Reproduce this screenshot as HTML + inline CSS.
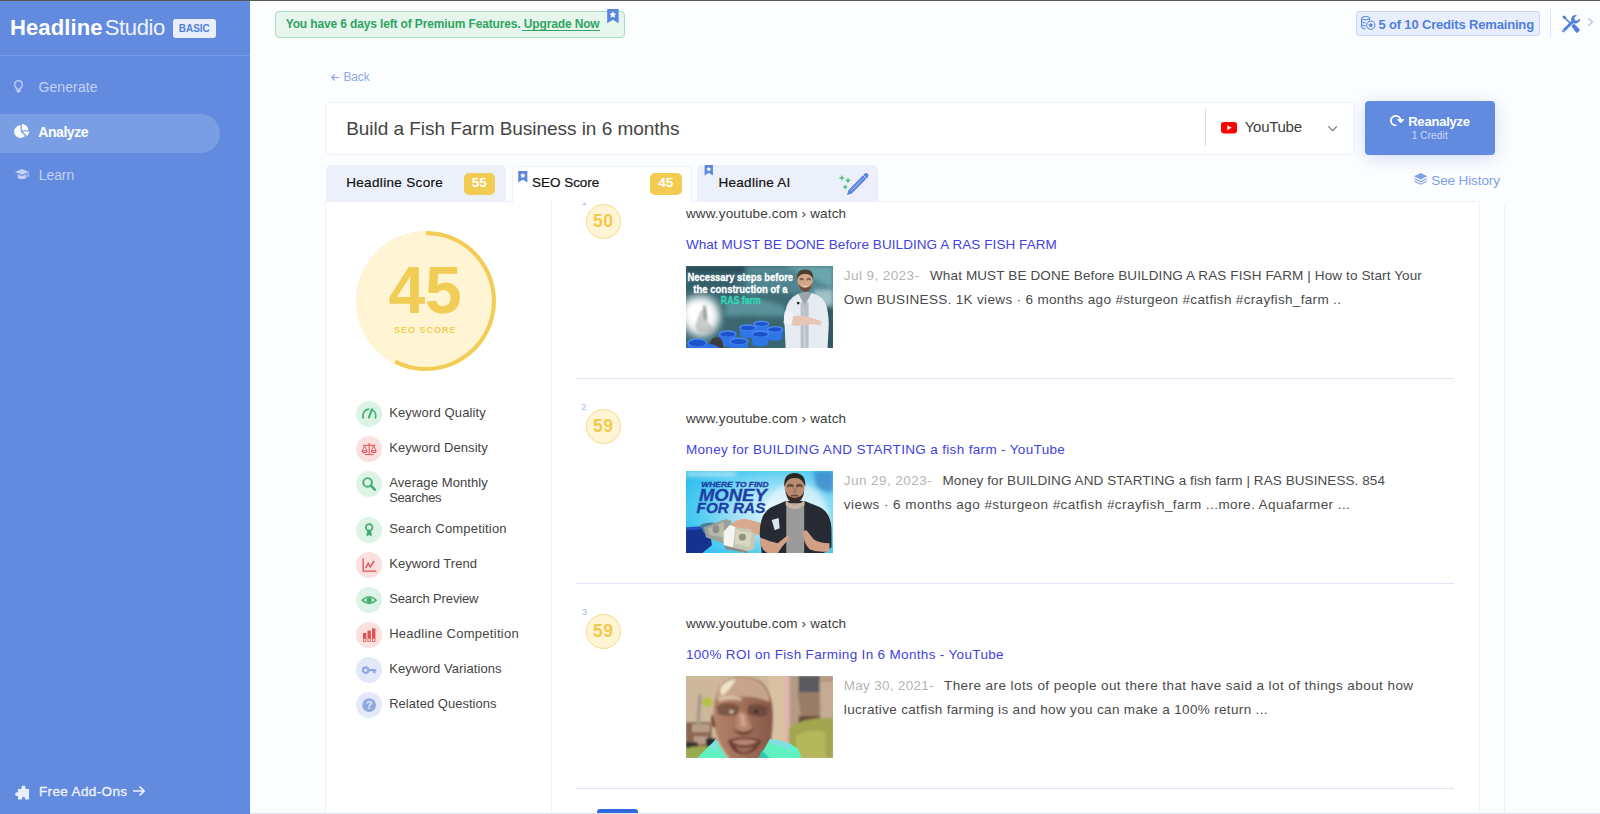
<!DOCTYPE html>
<html><head><meta charset="utf-8"><title>Headline Studio</title>
<style>
html,body{margin:0;padding:0}
body{width:1600px;height:814px;overflow:hidden;position:relative;background:#fcfdfe;font-family:"Liberation Sans",sans-serif}
.t{position:absolute;white-space:pre;line-height:1;font-family:"Liberation Sans",sans-serif}
.a{position:absolute}
svg{position:absolute;overflow:visible}
</style></head><body>
<div class="a" style="left:0px;top:0px;width:250px;height:814px;background:#628be0;"></div>
<div class="a" style="left:0px;top:55px;width:250px;height:1px;background:rgba(255,255,255,.13);"></div>
<div class="a" style="left:0px;top:114px;width:220px;height:38.5px;background:#7a9ee4;border-radius:0 20px 20px 0"></div>
<div class="a" style="left:173px;top:19px;width:43px;height:18.5px;background:#e9eefb;border-radius:3px"></div>
<div class="a" style="left:0px;top:0px;width:1600px;height:1px;background:#5a5a5a;"></div>
<div class="a" style="left:275px;top:11px;width:350px;height:27px;background:#e7f6ec;border:1px solid #a9dcbf;border-radius:4px;box-sizing:border-box"></div>
<div class="a" style="left:522.3px;top:30px;width:77.3px;height:1px;background:#2fa563;"></div>
<div class="a" style="left:1355.5px;top:11px;width:184px;height:24.5px;background:#e8eefb;border:1px solid #c9d6f5;border-radius:3px;box-sizing:border-box"></div>
<div class="a" style="left:1550px;top:9px;width:1px;height:28.5px;background:#dfe6f7;"></div>
<div class="a" style="left:325px;top:101.5px;width:1030px;height:53px;background:#fff;border:1px solid #edf0f8;border-radius:5px;box-sizing:border-box"></div>
<div class="a" style="left:1204.5px;top:109px;width:1px;height:37px;background:#dcdcdc;"></div>
<div class="a" style="left:1365px;top:101px;width:130px;height:53.5px;background:#628be0;border-radius:4px;box-shadow:0 3px 18px rgba(98,139,224,.28)"></div>
<div class="a" style="left:325.5px;top:165px;width:180.5px;height:37px;background:#ecf0fb;border-radius:5px 5px 0 0"></div>
<div class="a" style="left:697px;top:165px;width:181px;height:37px;background:#ecf0fb;border-radius:5px 5px 0 0"></div>
<div class="a" style="left:325px;top:201px;width:1179.5px;height:620px;background:#fff;border:1px solid #edf0f9;border-radius:0 6px 0 0;box-sizing:border-box"></div>
<div class="a" style="left:511.5px;top:165.5px;width:180px;height:36.5px;background:#fff;border:1px solid #edf0f9;border-bottom:none;border-radius:5px 5px 0 0;box-sizing:border-box"></div>
<div class="a" style="left:463.5px;top:173px;width:31.5px;height:21.5px;background:#f2cb51;border-radius:5px"></div>
<div class="a" style="left:650px;top:173px;width:31.5px;height:21.5px;background:#f2cb51;border-radius:5px"></div>
<div class="a" style="left:551px;top:201px;width:1px;height:613px;background:#eef1f9;"></div>
<div class="a" style="left:1479px;top:201px;width:1px;height:613px;background:#eef1f9;"></div>
<div class="a" style="left:1480px;top:201px;width:24px;height:613px;background:#fcfdff;"></div>
<div class="a" style="left:576px;top:378px;width:878px;height:1px;background:#dfe6f6;"></div>
<div class="a" style="left:576px;top:583px;width:878px;height:1px;background:#dfe6f6;"></div>
<div class="a" style="left:576px;top:788px;width:878px;height:1px;background:#dfe6f6;"></div>
<div class="a" style="left:586px;top:203.9px;width:35px;height:35px;background:#fff4d3;border:1px solid #f6dd86;border-radius:50%;box-sizing:border-box"></div>
<div class="a" style="left:586px;top:408.9px;width:35px;height:35px;background:#fff4d3;border:1px solid #f6dd86;border-radius:50%;box-sizing:border-box"></div>
<div class="a" style="left:586px;top:613.9px;width:35px;height:35px;background:#fff4d3;border:1px solid #f6dd86;border-radius:50%;box-sizing:border-box"></div>
<div class="a" style="left:580px;top:201.5px;width:10px;height:4px;overflow:hidden"><span class="t" style="left:1.6px;top:-5px;font-size:9.5px;color:#a9bcec">1</span></div>
<div class="a" style="left:250px;top:812.5px;width:1350px;height:1.5px;background:#dfe3ec;z-index:5"></div>
<div class="a" style="left:597px;top:809px;width:41px;height:6px;background:#2f6bdc;border-radius:3px 3px 0 0"></div>
<svg style="left:355.5px;top:231px" width="140" height="140" viewBox="0 0 140 140">
<circle cx="70" cy="70" r="70" fill="#fff4d3"/>
<path d="M70 2 A68 68 0 1 1 39.1 130.6" fill="none" stroke="#f2cd55" stroke-width="4"/>
</svg>
<div class="a" style="left:355.5px;top:400.8px;width:26.3px;height:26.3px;background:#dcf3e5;border-radius:50%"></div>
<div class="a" style="left:355.5px;top:435.8px;width:26.3px;height:26.3px;background:#fbe0e0;border-radius:50%"></div>
<div class="a" style="left:355.5px;top:470.8px;width:26.3px;height:26.3px;background:#dcf3e5;border-radius:50%"></div>
<div class="a" style="left:355.5px;top:516.9px;width:26.3px;height:26.3px;background:#dcf3e5;border-radius:50%"></div>
<div class="a" style="left:355.5px;top:552px;width:26.3px;height:26.3px;background:#fbe0e0;border-radius:50%"></div>
<div class="a" style="left:355.5px;top:587px;width:26.3px;height:26.3px;background:#dcf3e5;border-radius:50%"></div>
<div class="a" style="left:355.5px;top:622px;width:26.3px;height:26.3px;background:#fbe0e0;border-radius:50%"></div>
<div class="a" style="left:355.5px;top:657px;width:26.3px;height:26.3px;background:#e3e9f8;border-radius:50%"></div>
<div class="a" style="left:355.5px;top:692px;width:26.3px;height:26.3px;background:#e3e9f8;border-radius:50%"></div>
<svg style="left:13.7px;top:79.8px" width="9" height="13" viewBox="0 0 9 13"><path d="M4.5 .7A3.8 3.8 0 0 0 2.3 7.6V9h4.4V7.6A3.8 3.8 0 0 0 4.5 .7Z" fill="none" stroke="#c3d2f3" stroke-width="1.2"/><path d="M2.6 9.6h3.8v1.6L5.4 12.6H3.6L2.6 11.2Z" fill="#c3d2f3"/></svg>
<svg style="left:14px;top:123.9px" width="15.4" height="14" viewBox="0 0 15.4 14"><path d="M6.6 1.3V7.6L11 12A6.3 6.3 0 1 1 6.6 1.3Z" fill="#fff"/><path d="M7.9 0A6.4 6.4 0 0 1 14.3 6.3H7.9Z" fill="#fff"/><path d="M8.6 7.6H15.3A6.4 6.4 0 0 1 13 12Z" fill="#fff"/></svg>
<svg style="left:14.6px;top:169.2px" width="14" height="12" viewBox="0 0 14 12"><path d="M7 0L14 2.9 7 5.8 0 2.9Z" fill="#c3d2f3"/><path d="M2.6 5.3V8.6C4 10.6 10 10.6 11.4 8.6V5.3L7 7.1Z" fill="#c3d2f3"/><path d="M13.2 3.3V8" stroke="#c3d2f3" stroke-width="1" fill="none"/></svg>
<svg style="left:14px;top:785px" width="15" height="14.5" viewBox="0 0 15 14.5"><path d="M4 4H7.5V2.6A2 2 0 0 1 11.5 2.6V4H15V14.5H11V13.2A1.5 1.5 0 0 0 8 13.2V14.5H4V11H2.6A1.9 1.9 0 0 1 2.6 7.3H4Z" fill="#e8eefc"/></svg>
<svg style="left:132.5px;top:786.3px" width="12" height="10" viewBox="0 0 12 10"><path d="M0 5H11M6.6 .6L11.2 5 6.6 9.4" fill="none" stroke="#f0f4fd" stroke-width="1.5"/></svg>
<svg style="left:330.6px;top:74px" width="8.2" height="7" viewBox="0 0 8.2 7"><path d="M8.2 3.5H.8M3.8 .5L.7 3.5 3.8 6.5" fill="none" stroke="#8fa9ea" stroke-width="1.2"/></svg>
<svg style="left:607px;top:8.8px" width="11.8" height="14.3" viewBox="0 0 12 15"><path d="M0 0H12V15L6 11.2 0 15Z" fill="#5b86e0"/><path d="M6 2.2L7.1 4.6 9.7 4.9 7.8 6.6 8.3 9.2 6 7.9 3.7 9.2 4.2 6.6 2.3 4.9 4.9 4.6Z" fill="#fff"/></svg>
<svg style="left:517.5px;top:171.2px" width="9.6" height="11.4" viewBox="0 0 12 15"><path d="M0 0H12V15L6 11.2 0 15Z" fill="#5b86e0"/><path d="M6 2.2L7.1 4.6 9.7 4.9 7.8 6.6 8.3 9.2 6 7.9 3.7 9.2 4.2 6.6 2.3 4.9 4.9 4.6Z" fill="#fff"/></svg>
<svg style="left:703.5px;top:164.7px" width="9.6" height="10.4" viewBox="0 0 12 15"><path d="M0 0H12V15L6 11.2 0 15Z" fill="#5b86e0"/><path d="M6 2.2L7.1 4.6 9.7 4.9 7.8 6.6 8.3 9.2 6 7.9 3.7 9.2 4.2 6.6 2.3 4.9 4.9 4.6Z" fill="#fff"/></svg>
<svg style="left:1360.7px;top:15.9px" width="14.3" height="14" viewBox="0 0 14.3 14"><g fill="none" stroke="#4f7fdd" stroke-width="1"><ellipse cx="4.6" cy="2.2" rx="4" ry="1.7"/><path d="M.6 2.2V11.2C.6 12.2 2.4 12.9 4.6 12.9"/><path d="M8.6 2.2V4.6"/><path d="M.6 5.2C.6 6.2 2.4 6.9 4.6 6.9"/><path d="M.6 8.2C.6 9.2 2.4 9.9 4.6 9.9"/><circle cx="9.8" cy="9.2" r="4.2" fill="#e8eefb"/></g><path d="M9.8 6.6L10.6 8.3 12.4 8.5 11.1 9.7 11.4 11.5 9.8 10.6 8.2 11.5 8.5 9.7 7.2 8.5 9 8.3Z" fill="#4f7fdd"/></svg>
<svg style="left:1562px;top:14.8px" width="18" height="17.2" viewBox="0 0 18 17.2"><g fill="#4f7fdd"><path d="M.4 1.6L1.6 .4 3.8 1.4 4.3 3.2 8.9 7.8 7.8 8.9 3.2 4.3 1.4 3.8Z"/><path d="M9.3 11.1L11.9 8.5 17.3 13.9A1.5 1.5 0 0 1 17.3 16L16 17.3A1.5 1.5 0 0 1 13.9 17.3Z"/><path d="M13.6 0A4.5 4.5 0 0 0 9.3 5.9L.5 14.7A1.4 1.4 0 0 0 .5 16.7A1.4 1.4 0 0 0 2.5 16.7L11.3 7.9A4.5 4.5 0 0 0 17.9 3.2L15.3 5.8 12.9 5.2 12.3 2.8 14.9 .2A4.5 4.5 0 0 0 13.6 0Z"/></g><circle cx="1.6" cy="15.6" r=".6" fill="#fbfcfe"/></svg>
<svg style="left:1588.4px;top:18.1px" width="5" height="8" viewBox="0 0 5 8"><path d="M.3 .2L4.6 4 .3 7.8" fill="none" stroke="#aebfee" stroke-width="1.2"/></svg>
<svg style="left:1220.5px;top:121.6px" width="16" height="11.4" viewBox="0 0 16 11.4"><rect width="16" height="11.4" rx="2.8" fill="#f00"/><path d="M6.3 3.2L10.6 5.7 6.3 8.2Z" fill="#fff"/></svg>
<svg style="left:1327.8px;top:125.5px" width="9.2" height="5.4" viewBox="0 0 9.2 5.4"><path d="M.4 .4L4.6 4.6 8.8 .4" fill="none" stroke="#777" stroke-width="1.3"/></svg>
<svg style="left:1389.9px;top:114.7px" width="14.2" height="11.4" viewBox="0 0 14.2 11.4"><path d="M5.6 10.4A4.8 4.8 0 1 1 10.6 5.4" fill="none" stroke="#fff" stroke-width="1.8" stroke-linecap="round"/><path d="M7.6 4.6L10.7 8 13.8 4.6Z" fill="#fff" stroke="#fff" stroke-width=".8" stroke-linejoin="round"/></svg>
<svg style="left:1414px;top:173.3px" width="13.3" height="11.6" viewBox="0 0 13.3 11.6"><path d="M6.65 0L13.3 3.2 6.65 6.4 0 3.2Z" fill="#7f9fe8"/><path d="M.6 5.7L6.65 8.6 12.7 5.7M.6 8.3L6.65 11.2 12.7 8.3" fill="none" stroke="#7f9fe8" stroke-width="1.1"/></svg>
<svg style="left:838.5px;top:172.5px" width="30" height="23" viewBox="0 0 30 23"><path d="M2.8 2.6Q2.8 5 5.199999999999999 5Q2.8 5 2.8 7.4Q2.8 5 0.3999999999999999 5Q2.8 5 2.8 2.6Z" fill="#3fb872" stroke="#3fb872" stroke-width=".5"/><path d="M9 4.800000000000001Q9 7.4 11.6 7.4Q9 7.4 9 10.0Q9 7.4 6.4 7.4Q9 7.4 9 4.800000000000001Z" fill="#3fb872" stroke="#3fb872" stroke-width=".5"/><path d="M6.2 11.8Q6.2 14 8.4 14Q6.2 14 6.2 16.2Q6.2 14 4.0 14Q6.2 14 6.2 11.8Z" fill="#3fb872" stroke="#3fb872" stroke-width=".5"/><g transform="translate(7.9,22.1) rotate(-45.5)"><path d="M0 0L4.6 -2.4H27.4A2.4 2.4 0 0 1 29.8 0A2.4 2.4 0 0 1 27.4 2.4H4.6Z" fill="#5b86e0"/><path d="M5.5 0H23.5" stroke="#dfe8fa" stroke-width=".6"/><path d="M25.6 -2.4V2.4" stroke="#ecf0fb" stroke-width=".8"/></g></svg>
<svg style="left:355.5px;top:400.8px" width="26.3" height="26.3" viewBox="0 0 26.3 26.3"><g fill="none" stroke="#3fae6f" stroke-width="1.7" stroke-linecap="round"><path d="M7.2 17A6.8 6.8 0 0 1 12.4 8.1"/><path d="M16.6 9.2A6.8 6.8 0 0 1 19.4 17" stroke-width="1.4"/><path d="M12.8 16.6L16 8.2" stroke-width="2"/></g></svg>
<svg style="left:355.5px;top:435.8px" width="26.3" height="26.3" viewBox="0 0 26.3 26.3"><g fill="none" stroke="#e05252" stroke-width="1"><path d="M13.15 7V18.4M9 18.6H17.3M7 9.3H19.3"/><path d="M8.6 9.6L6.4 14.6H10.8Z" stroke-width=".9"/><path d="M17.7 9.6L15.5 14.6H19.9Z" stroke-width=".9"/><path d="M6.2 14.8A2.4 1.8 0 0 0 11 14.8M15.3 14.8A2.4 1.8 0 0 0 20.1 14.8" stroke-width="1.2"/></g></svg>
<svg style="left:355.5px;top:470.8px" width="26.3" height="26.3" viewBox="0 0 26.3 26.3"><circle cx="11.6" cy="11.4" r="4.3" fill="none" stroke="#3fae6f" stroke-width="1.9"/><path d="M14.9 14.7L18.8 18.6" stroke="#3fae6f" stroke-width="2.5" stroke-linecap="round"/></svg>
<svg style="left:355.5px;top:516.9px" width="26.3" height="26.3" viewBox="0 0 26.3 26.3"><circle cx="13.15" cy="10.4" r="3.3" fill="none" stroke="#3fae6f" stroke-width="1.7"/><path d="M11.2 13.6L10.4 19.4 13.15 17.9 15.9 19.4 15.1 13.6" fill="#3fae6f"/></svg>
<svg style="left:355.5px;top:552px" width="26.3" height="26.3" viewBox="0 0 26.3 26.3"><g fill="none" stroke="#e05252" stroke-width="1.3"><path d="M7.2 6.6V19.2H20.4"/><path d="M9.6 16.4L12.2 11.2 14.2 15 18.2 9" stroke-width="1.4"/></g></svg>
<svg style="left:355.5px;top:587px" width="26.3" height="26.3" viewBox="0 0 26.3 26.3"><path d="M6.2 13.15Q13.15 6.4 20.1 13.15Q13.15 19.9 6.2 13.15Z" fill="none" stroke="#3fae6f" stroke-width="1.5"/><circle cx="13.15" cy="13.15" r="2.7" fill="#3fae6f"/></svg>
<svg style="left:355.5px;top:622px" width="26.3" height="26.3" viewBox="0 0 26.3 26.3"><g fill="#e05252"><rect x="7" y="11" width="3.4" height="5"/><rect x="11.5" y="8.6" width="3.4" height="7.4"/><rect x="16" y="6.4" width="3.4" height="9.6"/></g><g fill="none" stroke="#e05252" stroke-width=".8"><rect x="7.4" y="16.4" width="2.6" height="3"/><rect x="11.9" y="16.4" width="2.6" height="3"/><rect x="16.4" y="16.4" width="2.6" height="3"/></g></svg>
<svg style="left:355.5px;top:657px" width="26.3" height="26.3" viewBox="0 0 26.3 26.3"><circle cx="9.6" cy="13.15" r="2.7" fill="none" stroke="#8fa9e0" stroke-width="2.2"/><path d="M12.6 13.15H20.4M18.3 13.15V16.2" stroke="#8fa9e0" stroke-width="2.3" fill="none"/></svg>
<svg style="left:355.5px;top:692px" width="26.3" height="26.3" viewBox="0 0 26.3 26.3"><circle cx="13.15" cy="13.15" r="6.9" fill="#8fa9e0"/><text x="13.15" y="17.2" font-family="Liberation Sans, sans-serif" font-weight="700" font-size="11" fill="#e3e9f8" text-anchor="middle">?</text></svg>
<svg style="left:685.7px;top:265.9px;overflow:hidden" width="147.5" height="82.2" viewBox="0 0 148 82" preserveAspectRatio="none"><defs><filter id="b1" x="-20%" y="-20%" width="140%" height="140%"><feGaussianBlur stdDeviation="1"/></filter><filter id="b2" x="-30%" y="-30%" width="160%" height="160%"><feGaussianBlur stdDeviation="2.2"/></filter><filter id="b3" x="-50%" y="-50%" width="200%" height="200%"><feGaussianBlur stdDeviation="4"/></filter><filter id="b05" x="-10%" y="-10%" width="120%" height="120%"><feGaussianBlur stdDeviation=".5"/></filter></defs>
<rect width="148" height="82" fill="#3f6c76"/>
<g filter="url(#b2)">
<rect x="0" y="0" width="148" height="7" fill="#2c4c56"/>
<path d="M60 0H148V30H120Q90 22 60 30Z" fill="#4f858f"/>
<path d="M100 0L148 0 148 22Z" fill="#6aa6ae"/>
<path d="M40 36Q80 28 100 42L100 58Q70 44 40 52Z" fill="#5a919a"/>
<path d="M128 24H148V60H132Z" fill="#9fc4c8"/>
<path d="M0 8H50V30H0Z" fill="#35606a"/>
<path d="M36 50H100V82H36Z" fill="#3a6670"/>
<path d="M136 40H148V82H140Z" fill="#2f5560"/>
</g>
<g filter="url(#b3)"><ellipse cx="15" cy="50" rx="19" ry="20" fill="#f4f6f6"/><ellipse cx="11" cy="45" rx="15" ry="14" fill="#fff"/></g>
<g filter="url(#b1)" fill="#a8acac"><path d="M14 46L20 41 22 56 28 62 24 68 12 66 9 60Z" opacity=".6"/><path d="M17 40l3 -1 1 14 -3 1Z" fill="#777" opacity=".6"/></g>
<g filter="url(#b05)">
<path d="M67.7 57.4L68.9 65.4Q75.7 68.4 82.5 65.4L83.7 57.4Z" fill="#2f74e6"/><ellipse cx="75.7" cy="57.4" rx="8" ry="3" fill="#4a8cf2"/><ellipse cx="75.7" cy="57.8" rx="6.6" ry="2" fill="#1f52cc"/><path d="M81.0 63L82.2 73Q89.3 76.2 96.39999999999999 73L97.6 63Z" fill="#2f74e6"/><ellipse cx="89.3" cy="63" rx="8.3" ry="3.2" fill="#4a8cf2"/><ellipse cx="89.3" cy="63.4" rx="6.9" ry="2.2" fill="#1f52cc"/><path d="M53.4 61.4L54.6 70.4Q62 73.7 69.39999999999999 70.4L70.6 61.4Z" fill="#2f74e6"/><ellipse cx="62" cy="61.4" rx="8.6" ry="3.3" fill="#4a8cf2"/><ellipse cx="62" cy="61.8" rx="7.199999999999999" ry="2.3" fill="#1f52cc"/><path d="M65.6 67.6L66.8 78.6Q74.6 82.1 82.39999999999999 78.6L83.6 67.6Z" fill="#2f74e6"/><ellipse cx="74.6" cy="67.6" rx="9" ry="3.5" fill="#4a8cf2"/><ellipse cx="74.6" cy="68.0" rx="7.6" ry="2.5" fill="#1f52cc"/><path d="M32.8 67.6L34.0 78.6Q41.8 82.1 49.599999999999994 78.6L50.8 67.6Z" fill="#2f74e6"/><ellipse cx="41.8" cy="67.6" rx="9" ry="3.5" fill="#4a8cf2"/><ellipse cx="41.8" cy="68.0" rx="7.6" ry="2.5" fill="#1f52cc"/><path d="M43.4 75L44.6 84Q53 87.6 61.4 84L62.6 75Z" fill="#2f74e6"/><ellipse cx="53" cy="75" rx="9.6" ry="3.6" fill="#4a8cf2"/><ellipse cx="53" cy="75.4" rx="8.2" ry="2.6" fill="#1f52cc"/><path d="M1.3000000000000007 76.5L2.500000000000001 85.5Q11.3 89.9 20.1 85.5L21.3 76.5Z" fill="#2f74e6"/><ellipse cx="11.3" cy="76.5" rx="10" ry="4.4" fill="#4a8cf2"/><ellipse cx="11.3" cy="76.9" rx="8.6" ry="3.4000000000000004" fill="#1f52cc"/>
<path d="M24 77Q26 70 33 71Q38 74 37 82H25Z" fill="#3a3d40"/>
<path d="M18 79Q27 76 34 82H16Z" fill="#2f74e6"/>
</g>
<g filter="url(#b05)">
<path d="M100 82L99 60Q97 52 100 44Q102 33 112 28L126 27Q138 30 141 40Q144 52 143 64L142 82Z" fill="#e6ecf1"/>
<path d="M113 28L119 40 126 27Q119 24 113 28Z" fill="#9aa5ab"/>
<path d="M115 36h8v46h-8Z" fill="#aeb8be" opacity=".8"/>
<path d="M117 34L121 82H118Z" fill="#c9d2d8"/>
<path d="M104 51Q112 48 122 51Q130 53 136 55L135 59Q126 57 118 59Q108 61 103 57Z" fill="#e8c6b6"/>
<path d="M99 46Q103 42 108 47L106 58Q100 60 98 56Z" fill="#eef2f6"/>
<ellipse cx="119.5" cy="15" rx="7.6" ry="9.6" fill="#d4a78c"/>
<path d="M111.6 13Q111 3.4 119.5 3.6Q128.4 3.4 127.6 13Q125 7.6 119.5 8Q114 7.6 111.6 13Z" fill="#4a3c30"/>
<path d="M112.6 17Q114 25.6 119.6 26Q125.4 25.6 126.6 17Q124 22 119.6 21.6Q115 22 112.6 17Z" fill="#6a4e3c"/>
<circle cx="112.6" cy="37" r="1.3" fill="#222"/><path d="M114 12.4Q116 11.2 118.2 12.6V14.4Q116 13.4 114 14.4ZM121 12.6Q123 11.2 125.2 12.4V14.4Q123 13.4 121 14.4Z" fill="#6a4a3c" opacity=".8"/><path d="M116.4 19.4Q119.6 21 122.8 19.4Q119.6 22.6 116.4 19.4Z" fill="#f4ece6"/>
</g>
<g font-family="Liberation Sans, sans-serif" font-weight="700" fill="#fff" stroke="#fff" stroke-width=".35">
<text x="1.4" y="15.4" font-size="11.6" textLength="106" lengthAdjust="spacingAndGlyphs">Necessary steps before</text>
<text x="7.3" y="26.8" font-size="11.6" textLength="94.5" lengthAdjust="spacingAndGlyphs">the construction of a</text>
<text x="35" y="37.8" font-size="10.4" textLength="40" lengthAdjust="spacingAndGlyphs" fill="#30d8b4" stroke="#30d8b4">RAS farm</text>
</g>
</svg>
<svg style="left:685.7px;top:470.9px;overflow:hidden" width="147.5" height="82.2" viewBox="0 0 148 82" preserveAspectRatio="none"><defs><filter id="b1" x="-20%" y="-20%" width="140%" height="140%"><feGaussianBlur stdDeviation="1"/></filter><filter id="b2" x="-30%" y="-30%" width="160%" height="160%"><feGaussianBlur stdDeviation="2.2"/></filter><filter id="b3" x="-50%" y="-50%" width="200%" height="200%"><feGaussianBlur stdDeviation="4"/></filter><filter id="b05" x="-10%" y="-10%" width="120%" height="120%"><feGaussianBlur stdDeviation=".5"/></filter></defs>
<defs><radialGradient id="g2" cx=".62" cy=".5" r=".75"><stop offset="0" stop-color="#e8f8fd"/><stop offset=".35" stop-color="#a9e3f6"/><stop offset=".7" stop-color="#55cdf2"/><stop offset="1" stop-color="#27bdee"/></radialGradient></defs>
<rect width="148" height="82" fill="url(#g2)"/>
<g filter="url(#b2)">
<path d="M128 0H148V20Q138 24 130 14Z" fill="#3f86c8" opacity=".8"/>
<path d="M0 0H50V6H0Z" fill="#bfeaf8" opacity=".7"/>
<ellipse cx="110" cy="50" rx="34" ry="38" fill="#f4fbfe" opacity=".55"/>
</g>
<g filter="url(#b05)">
<path d="M0 57L14 56 24 60 26 74 16 82H0Z" fill="#16338f"/>
<path d="M0 56L15 55 15 58 0 59Z" fill="#2a4cc0"/>
<path d="M14 54Q22 50 30 52L30 62 18 62Z" fill="#4a7f94"/>
<path d="M18 56L40 48 46 50 42 70 36 72 20 66Z" fill="#9aa39a"/>
<path d="M22 57L38 51 38 66 24 64Z" fill="#b8b9aa"/>
<ellipse cx="30" cy="58" rx="3.4" ry="4" fill="#8c8f86"/>
<path d="M36 62L44 54 70 60 68 78 62 80 38 74Z" fill="#c8c7b4"/>
<path d="M38.4 60L44 54 49.6 55.4 47 77 38 74Z" fill="#f4f4f2"/>
<path d="M50 58L66 62 64 76 49 72Z" fill="#d9d6bd"/>
<ellipse cx="56.6" cy="66" rx="3.6" ry="3.4" fill="#8f957a"/>
<path d="M38 74L62 80 62 82 40 78Z" fill="#8a8d84"/>
<path d="M45 54Q50 47 60 48Q70 50 80 54L78 66Q70 64 64 58L50 56Z" fill="#d9a98e"/>
<path d="M76 82L74 62Q74 42 86 36L100 30 119 30 134 36Q146 42 146 60L146 76 138 82Z" fill="#262a33"/>
<path d="M100.6 32H118.6V82H100.6Z" fill="#9b9b9b"/>
<path d="M100 29Q109 38 119 29L119 34Q109 42 100 34Z" fill="#c8b5a4"/>
<path d="M86 49L93 47 94 57 89 59Z" fill="#d8e6f2"/>
<ellipse cx="109" cy="17" rx="10" ry="13.4" fill="#b98d74"/>
<path d="M98.6 16Q97.6 2 109 2Q120.6 2 119.6 16Q117 6.6 109 7Q101 6.6 98.6 16Z" fill="#2c2622"/>
<path d="M100 20Q101 31.4 109 32Q117.4 31.4 118.6 20Q116 27 109 26.6Q102.4 27 100 20Z" fill="#3a2c24"/><path d="M101.4 13.6Q105 11.6 108 13.8L108 16.4Q105 15 101.6 16.6ZM110.4 13.8Q113.6 11.6 117 13.6L116.8 16.6Q113.6 15 110.4 16.4Z" fill="#5a3e30" opacity=".8"/><path d="M107.6 17L110.6 17 111 21.4Q109.2 22.6 107.2 21.4Z" fill="#a37a62"/><path d="M105 24.2Q109 22.8 113 24.2L112.4 25.6Q109 24.8 105.6 25.6Z" fill="#6e4a3c"/>
<path d="M74 66Q82 70 92 72L102 64 104 67 96 76 92 82H82Q74 78 74 66Z" fill="#d2a084"/>
<path d="M117 60L121 59 128 68Q134 72 144 72L144 80Q132 82 124 78Q118 72 117 60Z" fill="#d2a084"/>
</g>
<g font-family="Liberation Sans, sans-serif" font-weight="700" font-style="italic" fill="#1c3ea6" stroke="#1c3ea6" stroke-width=".3">
<text x="15.3" y="15.8" font-size="7" textLength="67.5" lengthAdjust="spacingAndGlyphs">WHERE TO FIND</text>
<text x="13" y="29.6" font-size="16.6" textLength="68" lengthAdjust="spacingAndGlyphs">MONEY</text>
<text x="10.6" y="42" font-size="14.2" textLength="69" lengthAdjust="spacingAndGlyphs">FOR RAS</text>
</g>
</svg>
<svg style="left:685.7px;top:675.9px;overflow:hidden" width="147.5" height="82.2" viewBox="0 0 148 82" preserveAspectRatio="none"><defs><filter id="b1" x="-20%" y="-20%" width="140%" height="140%"><feGaussianBlur stdDeviation="1"/></filter><filter id="b2" x="-30%" y="-30%" width="160%" height="160%"><feGaussianBlur stdDeviation="2.2"/></filter><filter id="b3" x="-50%" y="-50%" width="200%" height="200%"><feGaussianBlur stdDeviation="4"/></filter><filter id="b05" x="-10%" y="-10%" width="120%" height="120%"><feGaussianBlur stdDeviation=".5"/></filter></defs>
<defs><linearGradient id="fg" x1="0" x2="1" y1="0" y2="0"><stop offset="0" stop-color="#b3826a"/><stop offset=".5" stop-color="#a06f58"/><stop offset="1" stop-color="#86594a"/></linearGradient></defs>
<rect width="148" height="82" fill="#cbb597"/>
<g filter="url(#b1)">
<path d="M0 0H100V82H0Z" fill="#cdb89b"/>
<path d="M82 0H100V82H86Z" fill="#d9c2a2"/>
<path d="M99 0H104V70H99Z" fill="#e2b6b0"/>
<path d="M104 0H148V50H104Z" fill="#b59a84"/>
<path d="M113 0H134V16H113Z" fill="#5a5a60"/>
<path d="M112 16H134V46H116Z" fill="#9a7c66"/>
<path d="M113 40H134V48H113Z" fill="#6c4a3c"/>
<path d="M134 6H148V44H136Z" fill="#c4ab92"/>
<path d="M103 52Q120 40 148 42V82H103Z" fill="#a3a650"/>
<path d="M110 60Q124 52 140 56V82H112Z" fill="#b5b85a"/>
<path d="M0 46H26V76H0Z" fill="#8a6650"/>
<path d="M6 48H24V56H6ZM8 60H22V68H8Z" fill="#b79c86"/>
<path d="M12 20L16 17 14 50 10 50Z" fill="#a89a8c"/>
<path d="M0 66H12V76H0Z" fill="#3a3030"/>
<path d="M20 62H30V70H20Z" fill="#2a2a30"/>
<path d="M0 72Q14 68 28 72V82H0Z" fill="#9aa850"/>
<ellipse cx="21.5" cy="26" rx="5.6" ry="5" fill="#b4c24a" transform="rotate(30 21.5 26)"/>
</g>
<g filter="url(#b1)">
<path d="M60 4Q88 10 87 44Q87 64 80 84H62Z" fill="#8a5c4a" opacity=".0"/>
<path d="M28 42Q26 10 44 3Q58 -2 72 4Q88 12 87 44Q87 64 80 84H46Q29 66 28 42Z" fill="url(#fg)"/>
<path d="M30 24Q32 6 50 2Q66 0 76 8Q84 16 84 26Q60 16 30 24Z" fill="#c7a58c"/>
<path d="M34 14Q38 4 50 3Q46 12 36 20Z" fill="#efe2c8"/>
<path d="M33 22Q44 17 56 22L55 25Q44 22 33 26Z" fill="#e0c8b0" opacity=".8"/>
<path d="M31 30Q41 24 53 30L53 38Q42 42 32 38Z" fill="#74503e" opacity=".85"/>
<path d="M62 30Q72 25 82 32L81 40Q71 42 62 38Z" fill="#6a4838" opacity=".85"/>
<ellipse cx="45.6" cy="35.6" rx="2.4" ry="1.8" fill="#c9c0b0"/>
<ellipse cx="70.6" cy="35.4" rx="2.4" ry="1.8" fill="#3a2a26"/>
<path d="M52 36Q57 34 61 38L66 52Q58 58 49 52Z" fill="#b88670"/>
<path d="M54 38Q57 36 59 40L60 50Q57 52 55 50Z" fill="#d8a890" opacity=".8"/>
<path d="M48 52Q57 60 68 52L66 56Q57 62 50 56Z" fill="#70483a"/>
<path d="M42 64Q58 58 76 64Q70 78 58 78Q46 78 42 64Z" fill="#6a4034"/>
<path d="M46 65Q58 61 72 65Q66 69 58 69Q50 69 46 65Z" fill="#b88474"/>
<path d="M50 70Q58 73 68 70Q64 76 58 76Q52 76 50 70Z" fill="#a06c5c"/>
<path d="M27 38Q24 40 26 50L30 52Z" fill="#70483a"/>
</g>
<g filter="url(#b05)">
<path d="M11 82L30 63 34 70 41 82Z" fill="#5ff2c0"/>
<path d="M24 70L30 63 33 69 30 76Z" fill="#8fd8e8" opacity=".7"/>
<path d="M73 82L84 63Q100 64 112 72L116 82Z" fill="#5ff2c0"/>
<path d="M84 63Q96 63 106 68L104 74Q94 68 84 68Z" fill="#8fd8ee" opacity=".7"/>
<path d="M73 82L76 74 84 82Z" fill="#2fc8b0"/>
</g>
</svg>
<span class="t" style="left:10.0px;top:16.5px;font-size:22px;font-weight:700;color:#fff;letter-spacing:0.125px;">Headline</span>
<span class="t" style="left:104.8px;top:16.5px;font-size:22px;color:#eef3fd;letter-spacing:-0.365px;">Studio</span>
<span class="t" style="left:178.8px;top:23.8px;font-size:10px;font-weight:700;color:#4f7fdd;letter-spacing:-0.025px;">BASIC</span>
<span class="t" style="left:38.4px;top:79.8px;font-size:14px;color:#c3d2f3;letter-spacing:0.116px;">Generate</span>
<span class="t" style="left:38.2px;top:124.5px;font-size:14px;font-weight:700;color:#fff;letter-spacing:-0.417px;">Analyze</span>
<span class="t" style="left:38.7px;top:168.4px;font-size:14px;color:#c3d2f3;letter-spacing:-0.062px;">Learn</span>
<span class="t" style="left:39.0px;top:785.4px;font-size:13.5px;color:#f0f4fd;letter-spacing:0.371px;-webkit-text-stroke:.3px #f0f4fd;">Free Add-Ons</span>
<span class="t" style="left:285.7px;top:18.2px;font-size:12px;font-weight:700;color:#2fa563;letter-spacing:-0.138px;">You have 6 days left of Premium Features. Upgrade Now</span>
<span class="t" style="left:1378.5px;top:17.9px;font-size:13px;font-weight:700;color:#4f7fdd;letter-spacing:-0.170px;">5 of 10 Credits Remaining</span>
<span class="t" style="left:343.5px;top:71.4px;font-size:12px;color:#8fa9ea;letter-spacing:-0.172px;">Back</span>
<span class="t" style="left:346.2px;top:118.5px;font-size:19px;color:#454545;letter-spacing:-0.038px;">Build a Fish Farm Business in 6 months</span>
<span class="t" style="left:1244.7px;top:118.9px;font-size:15px;color:#404040;letter-spacing:-0.265px;">YouTube</span>
<span class="t" style="left:1408.2px;top:115.3px;font-size:13px;font-weight:700;color:#fff;letter-spacing:-0.210px;">Reanalyze</span>
<span class="t" style="left:1411.7px;top:131.0px;font-size:10px;color:#cbd9f6;letter-spacing:0.136px;">1 Credit</span>
<span class="t" style="left:1431.3px;top:174.1px;font-size:13.5px;color:#7f9fe8;letter-spacing:-0.116px;">See History</span>
<span class="t" style="left:346.2px;top:176.2px;font-size:13.5px;color:#111;letter-spacing:0.335px;-webkit-text-stroke:.2px #111;">Headline Score</span>
<span class="t" style="left:532.0px;top:176.2px;font-size:13.5px;color:#111;letter-spacing:-0.026px;-webkit-text-stroke:.2px #111;">SEO Score</span>
<span class="t" style="left:718.5px;top:176.1px;font-size:13.5px;color:#111;letter-spacing:0.276px;-webkit-text-stroke:.2px #111;">Headline AI</span>
<span class="t" style="left:471.7px;top:176.2px;font-size:13.5px;font-weight:700;color:#fff;letter-spacing:0.134px;">55</span>
<span class="t" style="left:658.2px;top:176.2px;font-size:13.5px;font-weight:700;color:#fff;letter-spacing:0.134px;">45</span>
<span class="t" style="left:388.4px;top:256.6px;font-size:66px;font-weight:700;color:#f2cd55;letter-spacing:-0.061px;">45</span>
<span class="t" style="left:393.9px;top:326.1px;font-size:9px;font-weight:700;color:#f2cd55;letter-spacing:1.009px;">SEO SCORE</span>
<span class="t" style="left:389.2px;top:406.1px;font-size:13px;color:#444;letter-spacing:0.143px;">Keyword Quality</span>
<span class="t" style="left:389.2px;top:441.1px;font-size:13px;color:#444;letter-spacing:0.077px;">Keyword Density</span>
<span class="t" style="left:389.2px;top:475.8px;font-size:13px;color:#444;letter-spacing:0.091px;">Average Monthly</span>
<span class="t" style="left:389.2px;top:491.3px;font-size:13px;color:#444;letter-spacing:-0.365px;">Searches</span>
<span class="t" style="left:389.2px;top:521.9px;font-size:13px;color:#444;letter-spacing:0.190px;">Search Competition</span>
<span class="t" style="left:389.2px;top:556.8px;font-size:13px;color:#444;letter-spacing:0.028px;">Keyword Trend</span>
<span class="t" style="left:389.2px;top:591.8px;font-size:13px;color:#444;letter-spacing:-0.132px;">Search Preview</span>
<span class="t" style="left:389.2px;top:626.8px;font-size:13px;color:#444;letter-spacing:0.275px;">Headline Competition</span>
<span class="t" style="left:389.2px;top:661.8px;font-size:13px;color:#444;letter-spacing:0.075px;">Keyword Variations</span>
<span class="t" style="left:389.2px;top:696.8px;font-size:13px;color:#444;letter-spacing:0.020px;">Related Questions</span>
<span class="t" style="left:592.9px;top:212.7px;font-size:17.5px;font-weight:700;color:#f2c94c;letter-spacing:0.666px;">50</span>
<span class="t" style="left:592.9px;top:417.6px;font-size:17.5px;font-weight:700;color:#f2c94c;letter-spacing:0.666px;">59</span>
<span class="t" style="left:592.9px;top:622.6px;font-size:17.5px;font-weight:700;color:#f2c94c;letter-spacing:0.666px;">59</span>
<span class="t" style="left:581.3px;top:401.9px;font-size:9.5px;color:#a9bcec;">2</span>
<span class="t" style="left:581.8px;top:607.0px;font-size:9.5px;color:#a9bcec;">3</span>
<span class="t" style="left:685.9px;top:206.8px;font-size:13.5px;color:#3d3d3d;letter-spacing:0.152px;">www.youtube.com › watch</span>
<span class="t" style="left:685.9px;top:411.9px;font-size:13.5px;color:#3d3d3d;letter-spacing:0.152px;">www.youtube.com › watch</span>
<span class="t" style="left:685.9px;top:616.9px;font-size:13.5px;color:#3d3d3d;letter-spacing:0.152px;">www.youtube.com › watch</span>
<span class="t" style="left:685.9px;top:238.3px;font-size:13.5px;color:#4242e0;letter-spacing:0.075px;">What MUST BE DONE Before BUILDING A RAS FISH FARM</span>
<span class="t" style="left:685.9px;top:443.4px;font-size:13.5px;color:#4242e0;letter-spacing:0.338px;">Money for BUILDING AND STARTING a fish farm - YouTube</span>
<span class="t" style="left:685.9px;top:648.4px;font-size:13.5px;color:#4242e0;letter-spacing:0.334px;">100% ROI on Fish Farming In 6 Months - YouTube</span>
<span class="t" style="left:843.8px;top:268.6px;font-size:13.5px;color:#b5b5b5;letter-spacing:0.421px;">Jul 9, 2023-</span>
<span class="t" style="left:930.0px;top:268.6px;font-size:13.5px;color:#4a4a4a;letter-spacing:0.124px;">What MUST BE DONE Before BUILDING A RAS FISH FARM | How to Start Your</span>
<span class="t" style="left:843.8px;top:292.9px;font-size:13.5px;color:#4a4a4a;letter-spacing:0.335px;">Own BUSINESS. 1K views · 6 months ago #sturgeon #catfish #crayfish_farm ..</span>
<span class="t" style="left:843.8px;top:473.6px;font-size:13.5px;color:#b5b5b5;letter-spacing:0.434px;">Jun 29, 2023-</span>
<span class="t" style="left:942.5px;top:473.6px;font-size:13.5px;color:#4a4a4a;letter-spacing:0.081px;">Money for BUILDING AND STARTING a fish farm | RAS BUSINESS. 854</span>
<span class="t" style="left:843.8px;top:497.9px;font-size:13.5px;color:#4a4a4a;letter-spacing:0.443px;">views · 6 months ago #sturgeon #catfish #crayfish_farm ...more. Aquafarmer ...</span>
<span class="t" style="left:843.8px;top:678.6px;font-size:13.5px;color:#b5b5b5;letter-spacing:0.284px;">May 30, 2021-</span>
<span class="t" style="left:944.0px;top:678.6px;font-size:13.5px;color:#4a4a4a;letter-spacing:0.426px;">There are lots of people out there that have said a lot of things about how</span>
<span class="t" style="left:843.8px;top:702.9px;font-size:13.5px;color:#4a4a4a;letter-spacing:0.337px;">lucrative catfish farming is and how you can make a 100% return ...</span>
</body></html>
